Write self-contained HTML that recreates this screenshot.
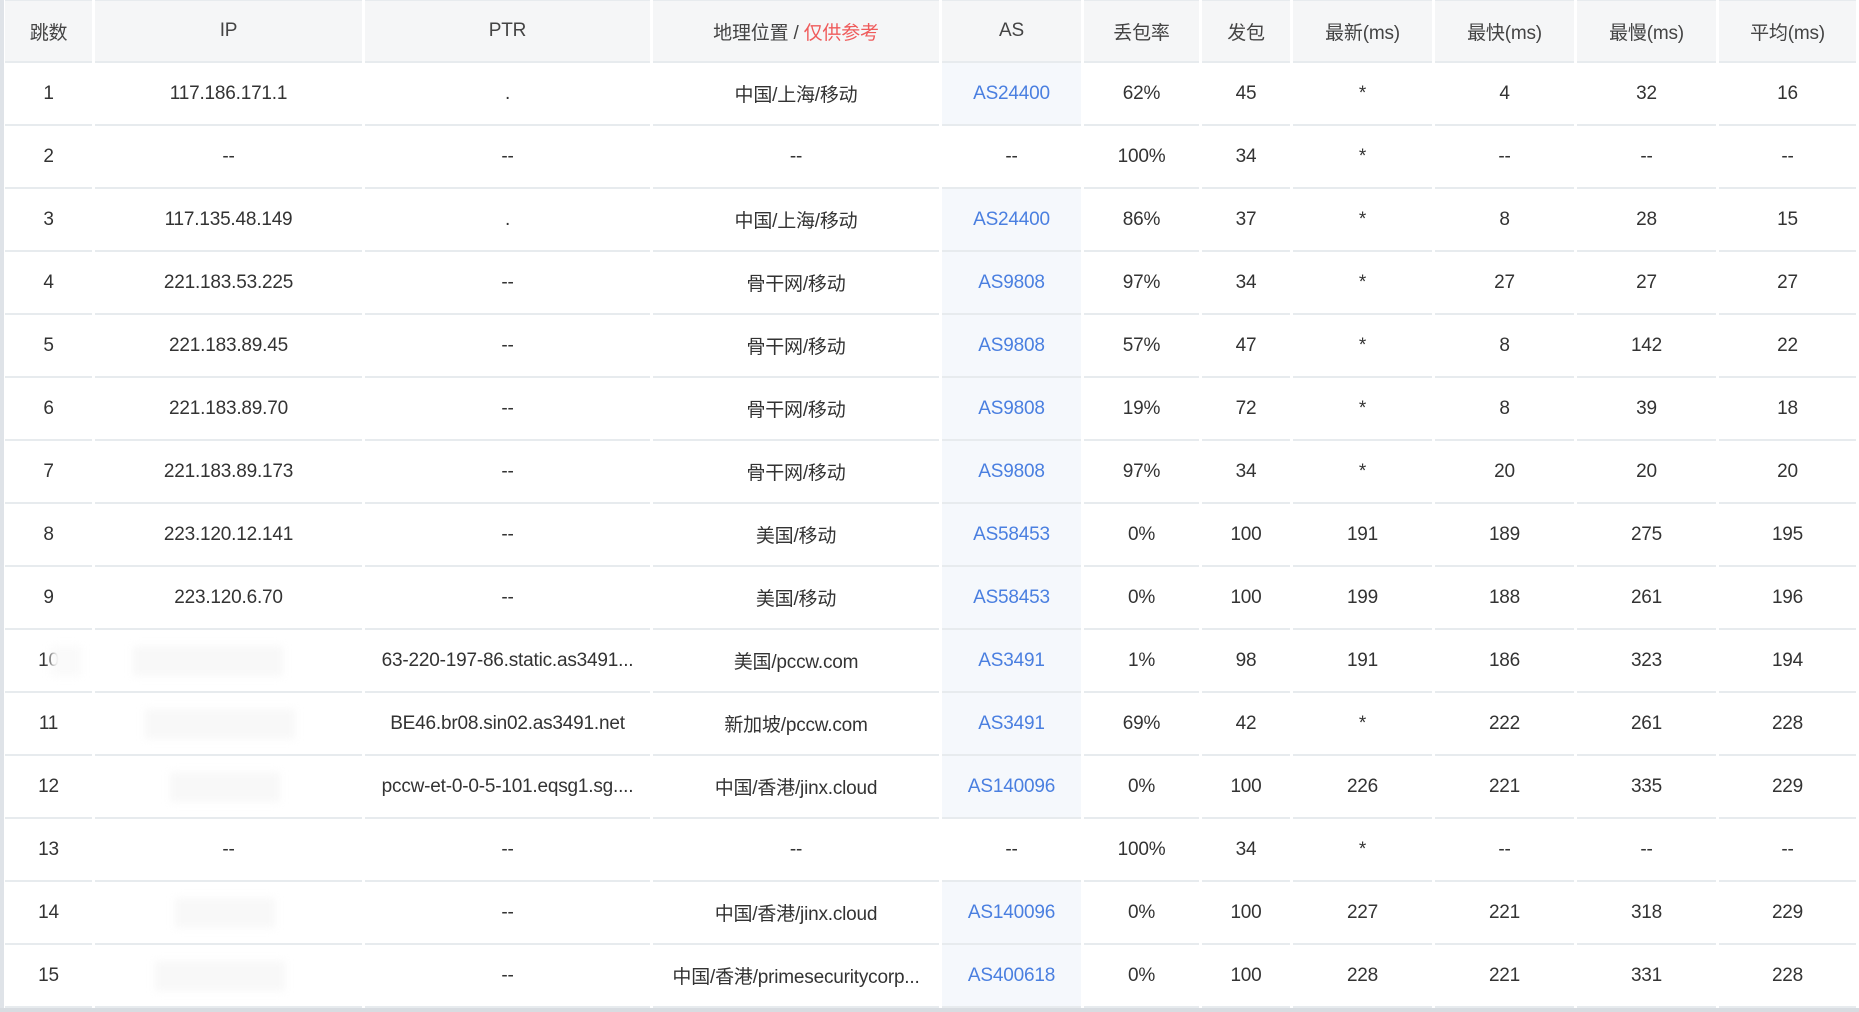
<!DOCTYPE html>
<html><head><meta charset="utf-8"><style>
html,body{margin:0;padding:0;width:1859px;height:1012px;overflow:hidden;background:#fff}
body{position:relative;font-family:"Liberation Sans","Noto Sans CJK SC",sans-serif}
.lb{position:absolute;left:0;top:0;width:4px;height:1012px;background:#dfe3e8}
.bb{position:absolute;left:0;top:1008px;width:1859px;height:4px;background:#d8dce1}
table{position:absolute;left:2px;top:0;border-collapse:separate;border-spacing:3px 0;table-layout:fixed}
td,th{height:61px;padding:0;text-align:center;font-size:19px;color:#333;border-bottom:2px solid #e7ebee;font-weight:normal;white-space:nowrap;overflow:hidden;position:relative;letter-spacing:-0.2px}
th{background:#f5f6f7;color:#444;border-top:1px solid #e7ebee;height:60px}
td.as{background:#f5f8fc;color:#4a7fe0}
.r{color:#ef5b5b}
.bl{position:absolute;background:#f8f8f8;height:30px;top:16px;filter:blur(4px)}
</style></head><body>
<div class="lb"></div>
<table>
<colgroup><col style="width:87px"><col style="width:267px"><col style="width:285px"><col style="width:286px"><col style="width:139px"><col style="width:115px"><col style="width:88px"><col style="width:139px"><col style="width:139px"><col style="width:139px"><col style="width:137px"></colgroup>
<tr><th>跳数</th><th>IP</th><th>PTR</th><th>地理位置 / <span class="r">仅供参考</span></th><th>AS</th><th>丢包率</th><th>发包</th><th>最新(ms)</th><th>最快(ms)</th><th>最慢(ms)</th><th>平均(ms)</th></tr>
<tr><td>1</td><td>117.186.171.1</td><td>.</td><td>中国/上海/移动</td><td class="as">AS24400</td><td>62%</td><td>45</td><td>*</td><td>4</td><td>32</td><td>16</td></tr>
<tr><td>2</td><td>--</td><td>--</td><td>--</td><td>--</td><td>100%</td><td>34</td><td>*</td><td>--</td><td>--</td><td>--</td></tr>
<tr><td>3</td><td>117.135.48.149</td><td>.</td><td>中国/上海/移动</td><td class="as">AS24400</td><td>86%</td><td>37</td><td>*</td><td>8</td><td>28</td><td>15</td></tr>
<tr><td>4</td><td>221.183.53.225</td><td>--</td><td>骨干网/移动</td><td class="as">AS9808</td><td>97%</td><td>34</td><td>*</td><td>27</td><td>27</td><td>27</td></tr>
<tr><td>5</td><td>221.183.89.45</td><td>--</td><td>骨干网/移动</td><td class="as">AS9808</td><td>57%</td><td>47</td><td>*</td><td>8</td><td>142</td><td>22</td></tr>
<tr><td>6</td><td>221.183.89.70</td><td>--</td><td>骨干网/移动</td><td class="as">AS9808</td><td>19%</td><td>72</td><td>*</td><td>8</td><td>39</td><td>18</td></tr>
<tr><td>7</td><td>221.183.89.173</td><td>--</td><td>骨干网/移动</td><td class="as">AS9808</td><td>97%</td><td>34</td><td>*</td><td>20</td><td>20</td><td>20</td></tr>
<tr><td>8</td><td>223.120.12.141</td><td>--</td><td>美国/移动</td><td class="as">AS58453</td><td>0%</td><td>100</td><td>191</td><td>189</td><td>275</td><td>195</td></tr>
<tr><td>9</td><td>223.120.6.70</td><td>--</td><td>美国/移动</td><td class="as">AS58453</td><td>0%</td><td>100</td><td>199</td><td>188</td><td>261</td><td>196</td></tr>
<tr><td>10<div class="bl" style="left:46px;width:30px;background:#fafafa"></div></td><td><div class="bl" style="left:38px;width:150px"></div></td><td>63-220-197-86.static.as3491...</td><td>美国/pccw.com</td><td class="as">AS3491</td><td>1%</td><td>98</td><td>191</td><td>186</td><td>323</td><td>194</td></tr>
<tr><td>11</td><td><div class="bl" style="left:50px;width:150px"></div></td><td>BE46.br08.sin02.as3491.net</td><td>新加坡/pccw.com</td><td class="as">AS3491</td><td>69%</td><td>42</td><td>*</td><td>222</td><td>261</td><td>228</td></tr>
<tr><td>12</td><td><div class="bl" style="left:75px;width:110px"></div></td><td>pccw-et-0-0-5-101.eqsg1.sg....</td><td>中国/香港/jinx.cloud</td><td class="as">AS140096</td><td>0%</td><td>100</td><td>226</td><td>221</td><td>335</td><td>229</td></tr>
<tr><td>13</td><td>--</td><td>--</td><td>--</td><td>--</td><td>100%</td><td>34</td><td>*</td><td>--</td><td>--</td><td>--</td></tr>
<tr><td>14</td><td><div class="bl" style="left:80px;width:100px"></div></td><td>--</td><td>中国/香港/jinx.cloud</td><td class="as">AS140096</td><td>0%</td><td>100</td><td>227</td><td>221</td><td>318</td><td>229</td></tr>
<tr><td>15</td><td><div class="bl" style="left:60px;width:130px"></div></td><td>--</td><td>中国/香港/primesecuritycorp...</td><td class="as">AS400618</td><td>0%</td><td>100</td><td>228</td><td>221</td><td>331</td><td>228</td></tr>
</table>
<div class="bb"></div>
</body></html>
